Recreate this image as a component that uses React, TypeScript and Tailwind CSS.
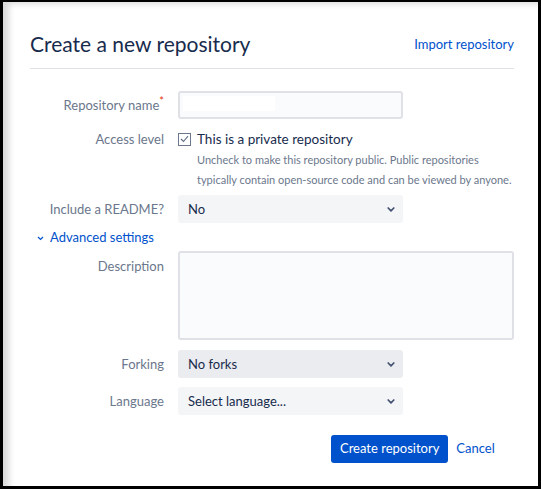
import React from 'react';

const font = { fontFamily: 'Lato, "Noto Sans", sans-serif' };

const Chevron: React.FC = () => (
  <svg width="8" height="5" viewBox="0 0 8 5" className="text-[#42526e] mr-[1px]">
    <path d="M1.2 1 L4 3.8 L6.8 1" fill="none" stroke="currentColor" strokeWidth="1.7" strokeLinecap="round" strokeLinejoin="round" />
  </svg>
);

const Select: React.FC<{ value: string; dark?: boolean }> = ({ value, dark }) => (
  <div className={`w-[225px] h-[28px] rounded-[3px] ${dark ? 'bg-[#ebecf0]' : 'bg-[#f4f5f7]'} flex items-center justify-between pl-[10px] pr-[7px] text-[13px] text-[#172b4d]`}>
    <span className="mt-[2px]">{value}</span>
    <Chevron />
  </div>
);

const Label: React.FC<{ children: React.ReactNode; className?: string }> = ({ children, className }) => (
  <div className={`w-[135px] shrink-0 pr-px text-right text-[13px] leading-[20px] text-[#6b778c] ${className ?? ''}`}>{children}</div>
);

const App: React.FC = () => {
  return (
    <div style={font} className="w-[541px] h-[489px] bg-black pt-[2px] pl-[3px] pr-[3px] pb-[3px]">
      <div className="w-full h-full bg-white shadow-[inset_10px_6px_6px_-4px_rgba(0,0,0,0.15)] pl-[27px] pr-[24px] pt-[28px]">
        <div className="flex items-center justify-between pb-[10px] border-b border-[#dfe1e6]">
          <h1 className="text-[21px] leading-[28px] text-[#172b4d]">Create a new repository</h1>
          <a className="text-[13px] text-[#0052cc] mt-[1px]">Import repository</a>
        </div>

        <div className="mt-[22px] flex items-center gap-[13px]">
          <Label>
            Repository name<span className="text-[#de350b] relative -top-[5px] text-[11px]">*</span>
          </Label>
          <div className="w-[225px] h-[28px] rounded-[3px] border-2 border-[#dfe1e6] bg-[#fafbfc] p-[3px]">
            <div className="w-[92px] h-[15px] bg-white" />
          </div>
        </div>

        <div className="mt-[10px] flex items-start gap-[13px]">
          <Label>Access level</Label>
          <div>
            <div className="flex items-center gap-[6px] h-[20px]">
              <div className="w-[13px] h-[13px] border border-[#6b778c] bg-white flex items-center justify-center">
                <svg width="9" height="8" viewBox="0 0 9 8">
                  <path d="M1 4 L3.5 6.5 L8 1.2" fill="none" stroke="#5e6c84" strokeWidth="1.1" />
                </svg>
              </div>
              <span className="text-[13.5px] text-[#172b4d]">This is a private repository</span>
            </div>
            <p className="ml-[19px] mt-px text-[11px] leading-[20px] text-[#6b778c] whitespace-nowrap">
              Uncheck to make this repository public. Public repositories
              <br />
              typically contain open-source code and can be viewed by anyone.
            </p>
          </div>
        </div>

        <div className="mt-[5px] flex items-center gap-[13px]">
          <Label>Include a README?</Label>
          <Select value="No" />
        </div>

        <div className="mt-[5px] flex items-center gap-[6px] pl-[7px] h-[20px] text-[13px] text-[#0052cc]">
          <svg width="7" height="5" viewBox="0 0 7 5">
            <path d="M1 1 L3.5 3.5 L6 1" fill="none" stroke="#0052cc" strokeWidth="1.2" />
          </svg>
          <span>Advanced settings</span>
        </div>

        <div className="mt-[3px] flex items-start gap-[13px]">
          <Label className="pt-[5px]">Description</Label>
          <div className="w-[337px] h-[89px] rounded-[3px] border-2 border-[#dfe1e6] bg-[#fafbfc]" />
        </div>

        <div className="mt-[10px] flex items-center gap-[13px]">
          <Label>Forking</Label>
          <Select value="No forks" dark />
        </div>

        <div className="mt-[9px] flex items-center gap-[13px]">
          <Label>Language</Label>
          <Select value="Select language..." />
        </div>

        <div className="mt-[20px] flex items-center gap-[8px] pl-[301px]">
          <button className="h-[28px] px-[9px] rounded-[3px] bg-[#0052cc] text-white text-[13px]">Create repository</button>
          <a className="text-[13px] text-[#0052cc]">Cancel</a>
        </div>
      </div>
    </div>
  );
};

export default App;
